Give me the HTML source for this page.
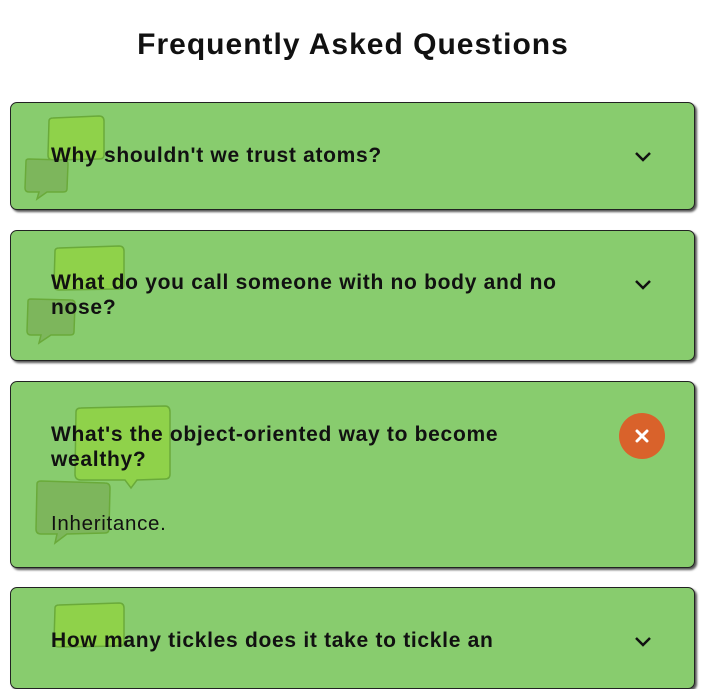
<!DOCTYPE html>
<html><head><style>
body{margin:0;background:#fff;font-family:"Liberation Sans",Arial,sans-serif;width:706px;height:652px;overflow:hidden;position:relative}
h1{position:absolute;top:28px;left:0;width:706px;text-align:center;margin:0;font-size:30px;letter-spacing:1px;font-weight:bold;color:#111}
.card{position:absolute;left:10px;width:683px;background:#88cc6e;border:1px solid #222;border-radius:7px;box-shadow:2px 2px 2px #555;overflow:hidden}
.q{position:absolute;left:40px;font-size:21px;letter-spacing:0.7px;font-weight:bold;color:#111;line-height:25px;width:535px;z-index:2}
.a{position:absolute;left:40px;font-size:20.5px;letter-spacing:0.7px;color:#111;z-index:2}
svg.b{position:absolute;z-index:1}
.chev{position:absolute;left:623px;z-index:2}
</style></head><body>
<h1>Frequently Asked Questions</h1>

<div class="card" style="top:102px;height:106px">
<svg class="b" style="left:34px;top:12px" width="62" height="50"><path d="M4 6 Q4 3 8 3 L54 1 Q59 1 59 6 L59 40 Q59 44 54 44 L8 45 Q3 45 3 40Z" fill="#8fd24a" stroke="#6aaa3a" stroke-width="1.5"/></svg>
<svg class="b" style="left:12px;top:54px" width="50" height="44"><path d="M3 4 Q3 2 6 2 L41 3 Q45 3 45 7 L44 32 Q44 35 40 35 L24 35 L14 42 L16 35 L6 35 Q2 35 2 31Z" fill="#7db65c" stroke="#6aaa3a" stroke-width="1.5"/></svg>
<div class="q" style="top:40px">Why shouldn't we trust atoms?</div>
<svg class="chev" style="top:48px" width="18" height="12"><path d="M2 2 L9 9 L16 2" fill="none" stroke="#111" stroke-width="2.5"/></svg>
</div>

<div class="card" style="top:230px;height:129px">
<svg class="b" style="left:40px;top:14px" width="76" height="52"><path d="M4 6 Q4 3 8 3 L68 1 Q73 1 73 6 L73 40 Q73 44 68 44 L8 45 Q3 45 3 40Z" fill="#8fd24a" stroke="#6aaa3a" stroke-width="1.5"/></svg>
<svg class="b" style="left:14px;top:66px" width="54" height="50"><path d="M3 4 Q3 2 6 2 L46 3 Q50 3 50 7 L49 35 Q49 38 45 38 L26 38 L14 46 L16 38 L6 38 Q2 38 2 34Z" fill="#7db65c" stroke="#6aaa3a" stroke-width="1.5"/></svg>
<div class="q" style="top:39px">What do you call someone with no body and no nose?</div>
<svg class="chev" style="top:48px" width="18" height="12"><path d="M2 2 L9 9 L16 2" fill="none" stroke="#111" stroke-width="2.5"/></svg>
</div>

<div class="card" style="top:381px;height:185px">
<svg class="b" style="left:60px;top:22px" width="104" height="86"><path d="M5 8 Q5 4 10 4 L94 2 Q99 2 99 8 L99 70 Q99 75 94 75 L66 76 L60 84 L54 76 L10 76 Q4 76 4 70Z" fill="#8fd24a" stroke="#6aaa3a" stroke-width="1.5"/></svg>
<svg class="b" style="left:22px;top:97px" width="82" height="68"><path d="M4 5 Q4 2 8 2 L72 4 Q77 4 77 9 L76 50 Q76 54 72 54 L34 55 L22 64 L24 55 L8 55 Q3 55 3 50Z" fill="#7db65c" stroke="#6aaa3a" stroke-width="1.5"/></svg>
<div class="q" style="top:40px">What's the object-oriented way to become wealthy?</div>
<div class="a" style="top:130px">Inheritance.</div>
<div style="position:absolute;left:608px;top:31px;width:46px;height:46px;border-radius:50%;background:#d9622b;z-index:2"></div>
<svg style="position:absolute;left:623px;top:46px;z-index:3" width="16" height="16"><path d="M3 3 L13 13 M13 3 L3 13" stroke="#fff" stroke-width="3" stroke-linecap="round"/></svg>
</div>

<div class="card" style="top:587px;height:100px">
<svg class="b" style="left:40px;top:14px" width="76" height="52"><path d="M4 6 Q4 3 8 3 L68 1 Q73 1 73 6 L73 40 Q73 44 68 44 L8 45 Q3 45 3 40Z" fill="#8fd24a" stroke="#6aaa3a" stroke-width="1.5"/></svg>
<div class="q" style="top:40px">How many tickles does it take to tickle an</div>
<svg class="chev" style="top:48px" width="18" height="12"><path d="M2 2 L9 9 L16 2" fill="none" stroke="#111" stroke-width="2.5"/></svg>
</div>
</body></html>
